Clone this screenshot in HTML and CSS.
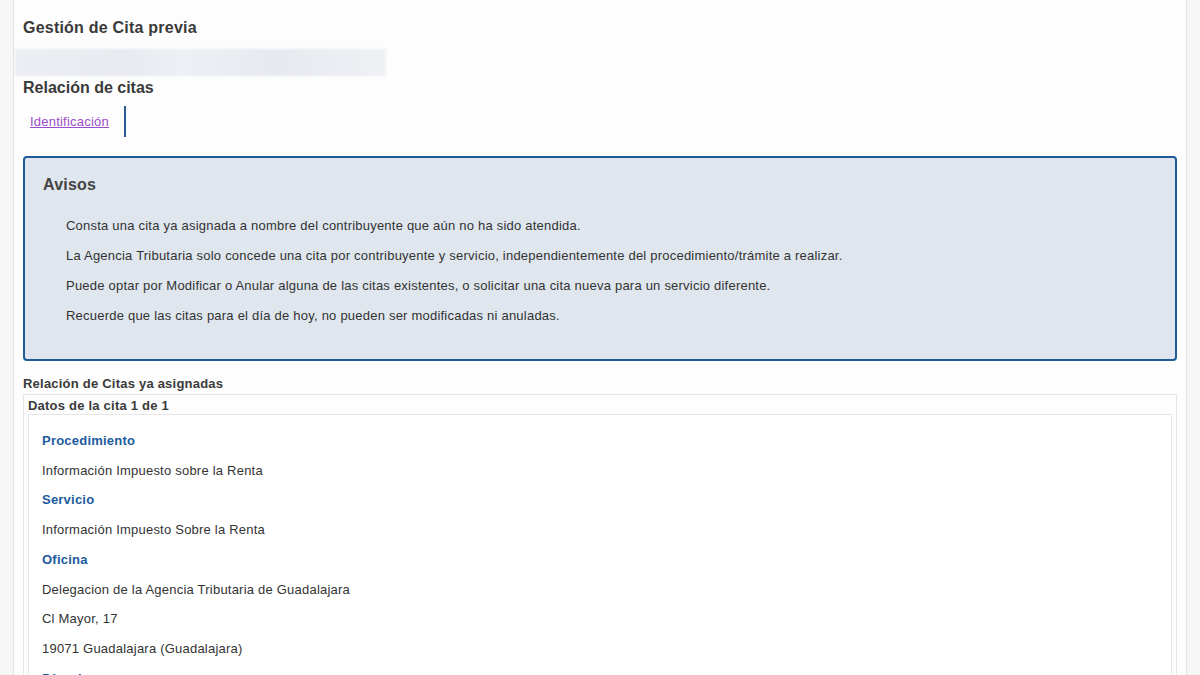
FILE: index.html
```html
<!DOCTYPE html>
<html lang="es">
<head>
    <meta charset="UTF-8">
    <title>Gestión de Cita previa</title>
    <link rel="stylesheet" href="styles.css">
</head>
<body>
    <div class="page">
        <h1>Gestión de Cita previa</h1>
        <div class="blur"></div>
        <h2>Relación de citas</h2>
        <div class="tabs">
            <a href="#">Identificación</a>
        </div>

        <div class="avisos">
            <h3>Avisos</h3>
            <p>Consta una cita ya asignada a nombre del contribuyente que aún no ha sido atendida.</p>
            <p>La Agencia Tributaria solo concede una cita por contribuyente y servicio, independientemente del procedimiento/trámite a realizar.</p>
            <p>Puede optar por Modificar o Anular alguna de las citas existentes, o solicitar una cita nueva para un servicio diferente.</p>
            <p>Recuerde que las citas para el día de hoy, no pueden ser modificadas ni anuladas.</p>
        </div>

        <div class="lista_titulo">Relación de Citas ya asignadas</div>
        <div class="cita">
            <div class="cita_titulo">Datos de la cita 1 de 1</div>
            <div class="cita_datos">
                <p class="label">Procedimiento</p>
                <p>Información Impuesto sobre la Renta</p>
                <p class="label">Servicio</p>
                <p>Información Impuesto Sobre la Renta</p>
                <p class="label">Oficina</p>
                <p>Delegacion de la Agencia Tributaria de Guadalajara</p>
                <p>Cl Mayor, 17</p>
                <p>19071 Guadalajara (Guadalajara)</p>
                <p class="label">Día y hora</p>
                <p>&nbsp;</p>
            </div>
        </div>
    </div>
</body>
</html>
```

FILE: styles.css
```css
body {
    font-family: 'Liberation Sans', Arial, sans-serif;
    margin: 0;
    padding: 0;
    background-color: #f6f6f6;
    color: #333;
    letter-spacing: 0.22px;
}

.page {
    margin: 0 13px;
    padding: 0 9px 20px 9px;
    min-height: 700px;
    background-color: #fdfdfd;
    border-left: 1px solid #e4e4e4;
    border-right: 1px solid #e4e4e4;
}

h1 {
    margin: 0;
    padding-top: 19px;
    font-size: 16px;
    line-height: 18px;
    color: #3a3a3a;
}

/* bloque difuminado bajo el titulo */
.blur {
    margin: 12px 0 0 -8px;
    width: 371px;
    height: 27px;
    background: linear-gradient(90deg, #eceef3 0%, #e7eaf0 30%, #edf0f4 45%, #e6e9ef 70%, #eff1f5 100%);
    filter: blur(1px);
}

h2 {
    margin: 3px 0 0 0;
    font-size: 16px;
    line-height: 18px;
    letter-spacing: 0;
    color: #3a3a3a;
}

.tabs {
    display: flex;
    margin-top: 9px;
}

.tabs a {
    display: flex;
    align-items: center;
    height: 31px;
    padding: 0 15px 0 7px;
    border-right: 2px solid #2a5a91;
    font-size: 13px;
    color: #9b4dca;
    text-decoration: underline;
}

.avisos {
    margin-top: 19px;
    padding: 18px 18px 28px 18px;
    background-color: #dfe6ee;
    border: 2px solid #22599a;
    border-radius: 4px;
}

.avisos h3 {
    margin: 0 0 17px 0;
    font-size: 16px;
    line-height: 18px;
    color: #444;
}

.avisos p {
    margin: 0 0 0 23px;
    font-size: 13px;
    line-height: 30px;
    color: #333;
}

.lista_titulo {
    margin-top: 15px;
    font-size: 13px;
    font-weight: bold;
    line-height: 16px;
    color: #3a3a3a;
}

.cita {
    margin-top: 2px;
    padding: 0 4px;
    border: 1px solid #e6e6e6;
}

.cita_titulo {
    padding: 3px 0 0 0;
    font-size: 13px;
    font-weight: bold;
    line-height: 16px;
    color: #3a3a3a;
}

.cita_datos {
    padding: 11px 13px;
    border: 1px solid #e6e6e6;
    background-color: #fff;
}

.cita_datos p {
    margin: 0;
    font-size: 13px;
    line-height: 29.7px;
    color: #333;
}

.cita_datos .label {
    font-weight: bold;
    color: #1c5b9e;
}
```
